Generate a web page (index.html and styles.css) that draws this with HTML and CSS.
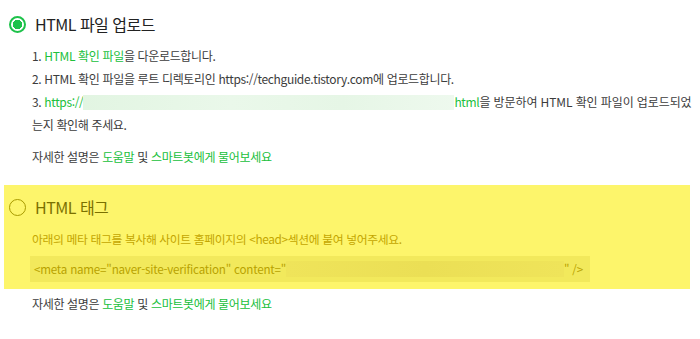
FILE: index.html
```html
<!DOCTYPE html>
<html lang="ko">
<head>
<meta charset="utf-8">
<link rel="stylesheet" href="styles.css">
</head>
<body>
<div class="page">
  <section class="method">
    <div class="method-head">
      <span class="radio radio-on"></span>
      <span class="method-title">HTML 파일 업로드</span>
    </div>
    <ol class="steps">
      <li>1. <a class="link">HTML 확인 파일</a>을 다운로드합니다.</li>
      <li>2. HTML 확인 파일을 루트 디렉토리인 https://techguide.tistory.com에 업로드합니다.</li>
      <li>3. <a class="link">https://<span class="blur-url"></span>html</a><span class="wide">을 방문하여 HTML 확인 파일이 업로드되었</span></li>
      <li>는지 확인해 주세요.</li>
    </ol>
    <p class="help">자세한 설명은 <a class="link">도움말</a> 및 <a class="link">스마트봇에게 물어보세요</a></p>
  </section>

  <section class="method method-hl">
    <div class="method-head">
      <span class="radio radio-off"></span>
      <span class="method-title">HTML 태그</span>
    </div>
    <p class="desc">아래의 메타 태그를 복사해 사이트 홈페이지의 &lt;head&gt;섹션에 붙여 넣어주세요.</p>
    <div class="code">&lt;meta name="naver-site-verification" content="<span class="blur-code"></span>" /&gt;</div>
  </section>
  <p class="help help-last">자세한 설명은 <a class="link">도움말</a> 및 <a class="link">스마트봇에게 물어보세요</a></p>
</div>
</body>
</html>
```
FILE: styles.css
```css
html, body {
  margin: 0;
  padding: 0;
  background: #ffffff;
}
body {
  font-family: "Noto Sans CJK KR", "Noto Sans", sans-serif;
  color: #3c3c3c;
  width: 700px;
  height: 339px;
  overflow: hidden;
}
.page {
  padding-top: 12px;
}
.method-head {
  display: flex;
  align-items: center;
  height: 24px;
  padding-left: 9px;
}
.radio {
  width: 17px;
  height: 17px;
  box-sizing: border-box;
  border-radius: 50%;
  margin-right: 9px;
  flex: none;
}
.radio-on {
  border: 2px solid #1dc24a;
  background: radial-gradient(circle, #1dc24a 0 4.5px, #ffffff 5px);
}
.radio-off {
  border: 1.5px solid #a89a00;
}
.method-title {
  font-size: 16px;
  color: #222222;
  letter-spacing: -0.5px;
}
.steps {
  list-style: none;
  margin: 8px 0 0 0;
  padding: 0 0 0 32px;
  font-size: 12px;
  line-height: 23px;
  letter-spacing: -0.35px;
  white-space: nowrap;
}
.wide {
  letter-spacing: -0.1px;
}
.link {
  color: #20c03c;
  text-decoration: none;
}
.blur-url {
  display: inline-block;
  width: 371px;
  height: 15px;
  vertical-align: -3px;
  background: linear-gradient(90deg, #e2f5e2, #eaf8ea 40%, #e6f6e6 70%, #eef9ee);
}
.help {
  margin: 9px 0 0 0;
  padding-left: 32px;
  font-size: 12px;
  line-height: 23px;
  letter-spacing: -0.35px;
  white-space: nowrap;
}
.method-hl {
  margin: 17px 10px 0 4px;
  background: #fdf56b;
  padding: 10px 0 7px 0;
}
.method-hl .method-head {
  padding-left: 5px;
}
.method-hl .method-title {
  color: #7a7000;
}
.desc {
  margin: 10px 0 0 0;
  padding-left: 28px;
  font-size: 11.8px;
  line-height: 20px;
  color: #c4a600;
  letter-spacing: -0.35px;
  white-space: nowrap;
}
.code {
  margin: 7px 0 0 26px;
  width: 560px;
  height: 26px;
  box-sizing: border-box;
  background: #f2e95c;
  padding-left: 4px;
  font-size: 11.6px;
  line-height: 26px;
  color: #b8a200;
  white-space: nowrap;
  overflow: hidden;
  letter-spacing: -0.2px;
}
.blur-code {
  display: inline-block;
  width: 278px;
  height: 16px;
  vertical-align: -3px;
  background: linear-gradient(90deg, #efe45a, #ebdf55 50%, #efe45a);
}
.help-last {
  margin-top: 3px;
}
```
